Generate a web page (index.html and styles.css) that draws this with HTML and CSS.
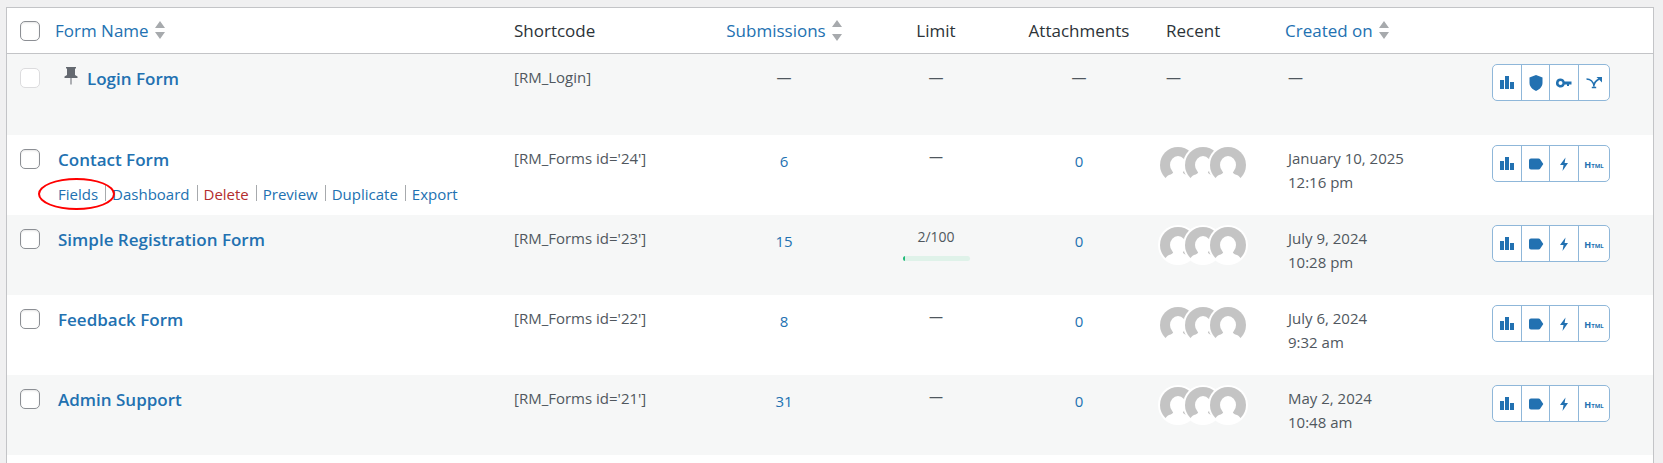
FILE: index.html
```
<!DOCTYPE html>
<html lang="en">
<head>
    <meta charset="UTF-8">
    <meta name="viewport" content="width=device-width, initial-scale=1.0">
    <title>Forms</title>
    <link rel="stylesheet" href="styles.css">
</head>
<body>
    <!-- shared icons -->
    <svg class="sprite" aria-hidden="true">
        <symbol id="i-chart" viewBox="0 0 16 16"><path d="M1 5h4v9H1zM6 1h4v13H6zM11 7h4v7h-4z"/></symbol>
        <symbol id="i-shield" viewBox="0 0 16 16"><path d="M8 0l6.500 2.500V8c0 3.500-2.800 6.300-6.500 8-3.700-1.700-6.500-4.500-6.500-8V2.500z"/></symbol>
        <symbol id="i-key" viewBox="0 0 16 16"><path fill-rule="evenodd" d="M4.500 3.500a4.500 4.500 0 1 0 4.200 6H11V11h2V9.500h2.500v-3H8.700a4.500 4.500 0 0 0-4.200-3zm0 2.500a2 2 0 1 1 0 4 2 2 0 0 1 0-4z"/></symbol>
        <symbol id="i-route" viewBox="0 0 16 16"><path d="M.5 4C4 4 7.500 6.500 8 11.500M8 10c.4-2.500 2.500-4.500 5-6M5.800 12.500h4.400" fill="none" stroke="currentColor" stroke-width="1.700"/><path d="M10.500 2H16v5.500z"/></symbol>
        <symbol id="i-label" viewBox="0 0 16 16"><path d="M3 2.500h7.500c.8 0 1.300.3 1.800 1L15.300 8l-3 4.500c-.5.700-1 1-1.800 1H3a2 2 0 0 1-2-2v-7a2 2 0 0 1 2-2z"/></symbol>
        <symbol id="i-bolt" viewBox="0 0 16 16"><path d="M9.500 1.500L4 9h3.500L6.500 15 12 7H8.600z"/></symbol>
        <symbol id="i-sort" viewBox="0 0 10 18"><path d="M0 7l5-7 5 7zM0 11h10l-5 7z"/></symbol>
        <symbol id="i-sort-wide" viewBox="0 0 10 22"><path d="M0 7l5-7 5 7zM0 14h10l-5 7z"/></symbol>
        <symbol id="i-pin" viewBox="0 0 14 18"><path d="M2 0h10v1.500h-1V8l2.500 1.500v1.500H7.500v6l-.5 1-.5-1v-6H.5V9.500L3 8V1.500H2z"/></symbol>
        <symbol id="i-avatar" viewBox="0 0 40 40"><circle cx="20" cy="20" r="20" fill="#fff"/><circle cx="20" cy="20" r="18" fill="#c4c4c4"/><ellipse cx="20" cy="20" rx="8" ry="9" fill="#fff"/><path d="M15 25c1 3-1 4-4 5-2 1-3 2-4 4a19 19 0 0 0 26 0c-1-2-2-3-4-4-3-1-5-2-4-5z" fill="#fff"/></symbol>
    </svg>

    <main class="panel">
        <table class="forms">
            <colgroup>
                <col class="col-check">
                <col class="col-name">
                <col class="col-shortcode">
                <col class="col-submissions">
                <col class="col-limit">
                <col class="col-attachments">
                <col class="col-recent">
                <col class="col-created">
                <col class="col-tools">
            </colgroup>
            <thead>
                <tr>
                    <th class="check"><input type="checkbox" aria-label="Select all"></th>
                    <th><a class="sort" href="#">Form Name <svg><use href="#i-sort"/></svg></a></th>
                    <th>Shortcode</th>
                    <th class="center"><a class="sort sort-wide" href="#">Submissions <svg><use href="#i-sort-wide"/></svg></a></th>
                    <th class="center">Limit</th>
                    <th class="center">Attachments</th>
                    <th class="recent">Recent</th>
                    <th class="created"><a class="sort" href="#">Created on <svg><use href="#i-sort"/></svg></a></th>
                    <th></th>
                </tr>
            </thead>
            <tbody>
                <tr>
                    <td class="check"><input type="checkbox" aria-label="Select Login Form" disabled></td>
                    <td class="name"><svg class="pin"><use href="#i-pin"/></svg><a class="title" href="#">Login Form</a></td>
                    <td>[RM_Login]</td>
                    <td class="center">—</td>
                    <td class="center">—</td>
                    <td class="center">—</td>
                    <td class="recent">—</td>
                    <td class="created">—</td>
                    <td class="tools">
                        <div class="group">
                            <button aria-label="Statistics"><svg><use href="#i-chart"/></svg></button>
                            <button aria-label="Security"><svg><use href="#i-shield"/></svg></button>
                            <button aria-label="Access"><svg><use href="#i-key"/></svg></button>
                            <button aria-label="Redirection"><svg><use href="#i-route"/></svg></button>
                        </div>
                    </td>
                </tr>
                <tr>
                    <td class="check"><input type="checkbox" aria-label="Select Contact Form"></td>
                    <td class="name">
                        <a class="title" href="#">Contact Form</a>
                        <div class="row-actions">
                            <a class="marked" href="#">Fields</a>
                            <a href="#">Dashboard</a>
                            <a class="delete" href="#">Delete</a>
                            <a href="#">Preview</a>
                            <a href="#">Duplicate</a>
                            <a href="#">Export</a>
                        </div>
                    </td>
                    <td>[RM_Forms id='24']</td>
                    <td class="center count"><a href="#">6</a></td>
                    <td class="center limit">—</td>
                    <td class="center count"><a href="#">0</a></td>
                    <td class="avatars"><svg><use href="#i-avatar"/></svg><svg><use href="#i-avatar"/></svg><svg><use href="#i-avatar"/></svg></td>
                    <td class="created">January 10, 2025<br>12:16 pm</td>
                    <td class="tools">
                        <div class="group">
                            <button aria-label="Statistics"><svg><use href="#i-chart"/></svg></button>
                            <button aria-label="Label"><svg><use href="#i-label"/></svg></button>
                            <button aria-label="Automation"><svg><use href="#i-bolt"/></svg></button>
                            <button class="html">Html</button>
                        </div>
                    </td>
                </tr>
                <tr>
                    <td class="check"><input type="checkbox" aria-label="Select Simple Registration Form"></td>
                    <td class="name"><a class="title" href="#">Simple Registration Form</a></td>
                    <td>[RM_Forms id='23']</td>
                    <td class="center count"><a href="#">15</a></td>
                    <td class="center limit">2/100<div class="bar"><span style="width: 2%"></span></div></td>
                    <td class="center count"><a href="#">0</a></td>
                    <td class="avatars"><svg><use href="#i-avatar"/></svg><svg><use href="#i-avatar"/></svg><svg><use href="#i-avatar"/></svg></td>
                    <td class="created">July 9, 2024<br>10:28 pm</td>
                    <td class="tools">
                        <div class="group">
                            <button aria-label="Statistics"><svg><use href="#i-chart"/></svg></button>
                            <button aria-label="Label"><svg><use href="#i-label"/></svg></button>
                            <button aria-label="Automation"><svg><use href="#i-bolt"/></svg></button>
                            <button class="html">Html</button>
                        </div>
                    </td>
                </tr>
                <tr>
                    <td class="check"><input type="checkbox" aria-label="Select Feedback Form"></td>
                    <td class="name"><a class="title" href="#">Feedback Form</a></td>
                    <td>[RM_Forms id='22']</td>
                    <td class="center count"><a href="#">8</a></td>
                    <td class="center limit">—</td>
                    <td class="center count"><a href="#">0</a></td>
                    <td class="avatars"><svg><use href="#i-avatar"/></svg><svg><use href="#i-avatar"/></svg><svg><use href="#i-avatar"/></svg></td>
                    <td class="created">July 6, 2024<br>9:32 am</td>
                    <td class="tools">
                        <div class="group">
                            <button aria-label="Statistics"><svg><use href="#i-chart"/></svg></button>
                            <button aria-label="Label"><svg><use href="#i-label"/></svg></button>
                            <button aria-label="Automation"><svg><use href="#i-bolt"/></svg></button>
                            <button class="html">Html</button>
                        </div>
                    </td>
                </tr>
                <tr>
                    <td class="check"><input type="checkbox" aria-label="Select Admin Support"></td>
                    <td class="name"><a class="title" href="#">Admin Support</a></td>
                    <td>[RM_Forms id='21']</td>
                    <td class="center count"><a href="#">31</a></td>
                    <td class="center limit">—</td>
                    <td class="center count"><a href="#">0</a></td>
                    <td class="avatars"><svg><use href="#i-avatar"/></svg><svg><use href="#i-avatar"/></svg><svg><use href="#i-avatar"/></svg></td>
                    <td class="created">May 2, 2024<br>10:48 am</td>
                    <td class="tools">
                        <div class="group">
                            <button aria-label="Statistics"><svg><use href="#i-chart"/></svg></button>
                            <button aria-label="Label"><svg><use href="#i-label"/></svg></button>
                            <button aria-label="Automation"><svg><use href="#i-bolt"/></svg></button>
                            <button class="html">Html</button>
                        </div>
                    </td>
                </tr>
            </tbody>
        </table>
    </main>
</body>
</html>
```
FILE: styles.css
```
* { box-sizing: border-box; }
body { display: flex; flex-direction: column; min-height: 100vh; margin: 0; padding: 7px 9px 0 6px; background: #f0f0f1; color: #50575e; font: 15px/24px "Open Sans", "Noto Sans", sans-serif; }
a { color: #2271b1; text-decoration: none; }
svg { fill: currentColor; }
.sprite { position: absolute; width: 0; height: 0; }
.panel { flex: 1; background: #fff; border: 1px solid #c3c4c7; border-bottom: 0; }

.forms { width: 100%; table-layout: fixed; border-collapse: separate; border-spacing: 0; }
.col-check { width: 40px; }
.col-shortcode { width: 200px; }
.col-submissions { width: 160px; }
.col-limit { width: 144px; }
.col-attachments { width: 142px; }
.col-recent { width: 127px; }
.col-created { width: 205px; }
.col-tools { width: 171px; }

th { height: 46px; padding: 0 8px; border-bottom: 1px solid #c3c4c7; color: #2c3338; font-size: 17px; font-weight: 400; text-align: left; white-space: nowrap; }
td { height: 80px; padding: 11px 10px 0; vertical-align: top; white-space: nowrap; }
tbody tr:nth-child(odd) { background: #f6f7f7; }
tbody tr:first-child td { height: 81px; }
th:nth-child(3) { padding-left: 10px; }
.center { padding-left: 0; padding-right: 0; text-align: center; }
.recent { padding-left: 16px; }
td.created { padding-left: 11px; }

.check { padding: 0 0 0 13px; }
td.check { padding-top: 14px; }
input[type="checkbox"] { appearance: none; display: block; width: 20px; height: 20px; margin: 0; background: #fff; border: 1px solid #8c8f94; border-radius: 5px; box-shadow: inset 0 1px 2px rgba(0,0,0,0.1); }
input[type="checkbox"]:disabled { border-color: #dcdcde; box-shadow: none; }

.sort { display: inline-flex; align-items: center; gap: 6px; vertical-align: middle; }
.sort svg { width: 10px; height: 18px; margin-bottom: 2px; color: #a7aaad; }
.sort-wide svg { height: 22px; margin-bottom: 0; }

.title { font-size: 17px; font-weight: 600; }
.name { padding-top: 13px; padding-left: 11px; }
.pin { width: 14px; height: 18px; margin: 0 9px 0 6px; vertical-align: baseline; color: #646970; }
.row-actions { display: flex; margin-top: 10px; }
.row-actions a { position: relative; }
.row-actions a + a { margin-left: 7px; padding-left: 7px; }
.row-actions a + a::before { content: ""; position: absolute; left: 0; top: 3px; width: 1px; height: 16px; background: #a7aaad; }
.row-actions .delete { color: #b32d2e; }
.row-actions .marked::after { content: ""; position: absolute; inset: -4px -17px -4px -20px; border: 2px solid #f00; border-radius: 50%; z-index: 1; pointer-events: none; }

.count { padding-top: 14px; }
.limit { padding-top: 12px; font-size: 14px; line-height: 20px; }
.bar { width: 67px; height: 5px; margin: 9px auto 0; overflow: hidden; background: #dff2e9; border-radius: 3px; }
.bar span { display: block; min-width: 2px; height: 5px; background: #1fb978; }

td.avatars { padding: 10px 0 0 8px; font-size: 0; }
.avatars svg { width: 40px; height: 40px; }
.avatars svg + svg { margin-left: -15px; }

.tools { padding-top: 10px; }
.group { display: inline-flex; overflow: hidden; background: #fff; border: 1px solid #8fb7d9; border-radius: 5px; }
.group button { display: flex; align-items: center; justify-content: center; width: 28px; height: 35px; padding: 0; background: none; border: 0; color: #2271b1; cursor: pointer; }
.group button:nth-child(3) { width: 29px; }
.group button:last-child { width: 31px; }
.group button + button { border-left: 1px solid #8fb7d9; }
.group svg { width: 16px; height: 16px; }
.group .html { padding-top: 2px; font: 700 9px/12px "Open Sans", sans-serif; font-variant: small-caps; }
```
